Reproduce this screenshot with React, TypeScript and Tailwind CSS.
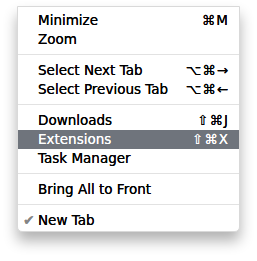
import React from "react";

type Item =
  | { kind: "item"; label: string; shortcut?: string; active?: boolean; checked?: boolean }
  | { kind: "sep" };

const items: Item[] = [
  { kind: "item", label: "Minimize", shortcut: "⌘M" },
  { kind: "item", label: "Zoom" },
  { kind: "sep" },
  { kind: "item", label: "Select Next Tab", shortcut: "⌥⌘→" },
  { kind: "item", label: "Select Previous Tab", shortcut: "⌥⌘←" },
  { kind: "sep" },
  { kind: "item", label: "Downloads", shortcut: "⇧⌘J" },
  { kind: "item", label: "Extensions", shortcut: "⇧⌘X", active: true },
  { kind: "item", label: "Task Manager" },
  { kind: "sep" },
  { kind: "item", label: "Bring All to Front" },
  { kind: "sep" },
  { kind: "item", label: "New Tab", checked: true },
];

const App = () => {
  return (
    <div className="w-[257px] h-[261px] bg-white pt-[6px] pl-[17px] font-['DejaVu_Sans',sans-serif]">
      {/* Window menu */}
      <div className="w-[223px] bg-white rounded-b-[5px] border border-[#d9d9d9] pt-[4px] pb-[1px] shadow-[0_9px_14px_rgba(0,0,0,0.3)]">
        {items.map((item, i) =>
          item.kind === "sep" ? (
            <div key={i} className="h-[12px] pt-[5px]">
              <div className="h-px w-full bg-[#e2e2e2]" />
            </div>
          ) : (
            <div
              key={i}
              className={
                "h-[19px] flex items-center justify-between pl-[20px] pr-[10px] text-[13.5px] leading-[19px] [text-shadow:0_0_0.4px_currentColor] " +
                (item.active ? "bg-[#6f747c] text-white" : "text-black")
              }
            >
              <span className="relative">
                {item.checked && (
                  <span className="absolute left-[-15px] text-[14px] text-[#858585]">✔</span>
                )}
                {item.label}
              </span>
              {item.shortcut && <span className="tracking-[1px]">{item.shortcut}</span>}
            </div>
          )
        )}
      </div>
    </div>
  );
};

export default App;
